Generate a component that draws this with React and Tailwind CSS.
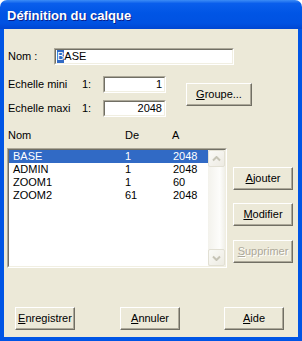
import React from "react";

const layers = [
  { nom: "BASE", de: "1", a: "2048" },
  { nom: "ADMIN", de: "1", a: "2048" },
  { nom: "ZOOM1", de: "1", a: "60" },
  { nom: "ZOOM2", de: "61", a: "2048" },
];

// classic raised 3D button
function Btn({ children, className = "", disabled = false }) {
  return (
    <button
      className={`h-[23px] bg-[#ECE9D8] border border-t-white border-l-white border-b-[#716F64] border-r-[#716F64] shadow-[inset_-1px_-1px_0_#ACA899] text-[11px] leading-[13px] ${
        disabled ? "text-[#ACA899] [text-shadow:1px_1px_0_#ffffff]" : "text-black"
      } ${className}`}
    >
      {children}
    </button>
  );
}

// sunken edit / list frame
function Sunken({ children, className = "", inner = "" }) {
  return (
    <div
      className={`border border-t-[#ACA899] border-l-[#ACA899] border-b-white border-r-white ${className}`}
    >
      <div
        className={`h-full w-full border border-t-[#716F64] border-l-[#716F64] border-b-[#F1EFE2] border-r-[#F1EFE2] bg-white ${inner}`}
      >
        {children}
      </div>
    </div>
  );
}

function ScrollArrow({ down }) {
  return (
    <div className="flex h-[17px] w-[17px] items-center justify-center rounded-[2px] border border-[#E2E0D4] bg-[linear-gradient(135deg,#FAFAF7,#EDEBE2)]">
      <svg width="9" height="6" viewBox="0 0 9 6">
        <path
          d={down ? "M1 1.5 L4.5 5 L8 1.5" : "M1 4.5 L4.5 1 L8 4.5"}
          stroke="#C6C4B6"
          strokeWidth="2"
          fill="none"
        />
      </svg>
    </div>
  );
}

export default function App() {
  return (
    <div className="flex h-[341px] w-[302px] flex-col font-['Liberation_Sans',Arial,sans-serif] text-[11px] leading-[13px] text-black">
      {/* title bar */}
      <div className="flex h-[29px] items-center rounded-t-[7px] bg-[linear-gradient(180deg,#3C8CF6_0%,#0A5EEC_12%,#0055E5_45%,#0052E2_80%,#0046D2_100%)] pl-[7px] pt-[2px]">
        <span className="text-[13px] font-bold text-white [text-shadow:1px_1px_0_#0A1E8A]">
          Définition du calque
        </span>
      </div>

      {/* body */}
      <div className="flex-1 border-x-4 border-b-4 border-[#0055E5] bg-[#ECE9D8] px-[4px] pt-[19px]">
        <div className="flex h-[17px] items-center">
          <span className="w-[46px]">Nom :</span>
          <Sunken className="h-[17px] w-[180px]" inner="flex items-center pl-[1px]">
            <span className="bg-[#316AC5] text-white">B</span>
            <span>ASE</span>
          </Sunken>
        </div>

        <div className="mt-[11px] flex">
          <div>
            <div className="flex h-[17px] items-center">
              <span className="w-[74px]">Echelle mini</span>
              <span className="w-[21px]">1:</span>
              <Sunken className="h-[17px] w-[63px]" inner="flex items-center justify-end pr-[2px]">
                1
              </Sunken>
            </div>
            <div className="mt-[7px] flex h-[17px] items-center">
              <span className="w-[74px]">Echelle maxi</span>
              <span className="w-[21px]">1:</span>
              <Sunken className="h-[17px] w-[63px]" inner="flex items-center justify-end pr-[2px]">
                2048
              </Sunken>
            </div>
          </div>
          <Btn className="ml-[20px] mt-[7px] w-[66px]">
            <u>G</u>roupe...
          </Btn>
        </div>

        <div className="mt-[12px] flex h-[13px]">
          <span className="w-[117px]">Nom</span>
          <span className="w-[47px]">De</span>
          <span>A</span>
        </div>

        <div className="mt-[6px] flex">
          <Sunken className="ml-[-1px] h-[120px] w-[220px]" inner="flex">
            <div className="flex-1">
              {layers.map((l, i) => (
                <div
                  key={l.nom}
                  className={`flex h-[13px] items-center pl-[4px] ${
                    i === 0 ? "bg-[#316AC5] text-white" : ""
                  }`}
                >
                  <span className="w-[112px]">{l.nom}</span>
                  <span className="w-[48px]">{l.de}</span>
                  <span>{l.a}</span>
                </div>
              ))}
            </div>
            <div className="flex w-[17px] flex-col justify-between bg-[linear-gradient(90deg,#F3F2EC,#FDFDFB_70%,#F0EFE8)]">
              <ScrollArrow />
              <ScrollArrow down />
            </div>
          </Sunken>

          <div className="ml-[6px] flex flex-col pt-[19px]">
            <Btn className="w-[60px]">
              <u>A</u>jouter
            </Btn>
            <Btn className="mt-[13px] w-[60px]">
              <u>M</u>odifier
            </Btn>
            <Btn className="mt-[14px] w-[60px]" disabled>
              <u>S</u>upprimer
            </Btn>
          </div>
        </div>

        <div className="mt-[39px] flex pl-[7px]">
          <Btn className="w-[60px]">
            <u>E</u>nregistrer
          </Btn>
          <Btn className="ml-[45px] w-[60px]">
            <u>A</u>nnuler
          </Btn>
          <Btn className="ml-[44px] w-[60px]">
            <u>A</u>ide
          </Btn>
        </div>
      </div>
    </div>
  );
}
